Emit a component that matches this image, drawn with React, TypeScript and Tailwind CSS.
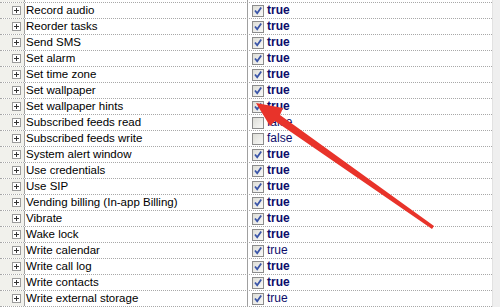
import React from 'react';

type Perm = { name: string; on: boolean; changed: boolean };

// permission list, bold means value differs from default
const perms: Perm[] = [
  { name: 'Record audio', on: true, changed: true },
  { name: 'Reorder tasks', on: true, changed: true },
  { name: 'Send SMS', on: true, changed: true },
  { name: 'Set alarm', on: true, changed: true },
  { name: 'Set time zone', on: true, changed: true },
  { name: 'Set wallpaper', on: true, changed: true },
  { name: 'Set wallpaper hints', on: true, changed: true },
  { name: 'Subscribed feeds read', on: false, changed: false },
  { name: 'Subscribed feeds write', on: false, changed: false },
  { name: 'System alert window', on: true, changed: true },
  { name: 'Use credentials', on: true, changed: true },
  { name: 'Use SIP', on: true, changed: true },
  { name: 'Vending billing (In-app Billing)', on: true, changed: true },
  { name: 'Vibrate', on: true, changed: true },
  { name: 'Wake lock', on: true, changed: true },
  { name: 'Write calendar', on: true, changed: false },
  { name: 'Write call log', on: true, changed: true },
  { name: 'Write contacts', on: true, changed: true },
  { name: 'Write external storage', on: true, changed: false },
];

const PlusBox = () => (
  <svg width="9" height="9" viewBox="0 0 9 9" className="block">
    <rect x="0.5" y="0.5" width="8" height="8" fill="#fff" stroke="#9a9a9a" />
    <path d="M2 4.5h5M4.5 2v5" stroke="#333" strokeWidth="1" />
  </svg>
);

const CheckBox: React.FC<{ on: boolean }> = ({ on }) => (
  <svg width="12" height="12" viewBox="0 0 12 12" className="block">
    <defs>
      <linearGradient id="cbg" x1="0" y1="0" x2="1" y2="1">
        <stop offset="0" stopColor="#dcdcd6" />
        <stop offset="1" stopColor="#fafaf8" />
      </linearGradient>
    </defs>
    <rect x="0.5" y="0.5" width="11" height="11" fill="url(#cbg)" stroke="#8c8c8c" />
    {on && <path d="M3 5.5l2.2 2.8L9.2 2.5" fill="none" stroke="#3a55a8" strokeWidth="1.8" />}
  </svg>
);

const Row: React.FC<{ p: Perm }> = ({ p }) => (
  <div className="flex h-[16px] border-b border-dotted border-[#a8a8a8]">
    <div className="w-[25px] shrink-0 bg-[#f1f1ec] border-r border-[#a0a0a0] flex items-center justify-end pr-[3px]">
      <PlusBox />
    </div>
    <div className="w-[223px] shrink-0 border-r border-[#a0a0a0] pl-[1px] text-[11.5px] leading-[15px] text-black truncate">
      {p.name}
    </div>
    <div className="flex-1 flex items-center gap-[3px] pl-[4px]">
      <CheckBox on={p.on} />
      <span className={`text-[12px] leading-[15px] text-[#0c0c6a] ${p.changed ? 'font-bold' : ''}`}>
        {p.on ? 'true' : 'false'}
      </span>
    </div>
  </div>
);

export default function App() {
  return (
    <div className="relative w-[500px] h-[307px] overflow-hidden bg-white flex" style={{ fontFamily: '"Liberation Sans", Arial, sans-serif' }}>
      <div className="flex-1 flex flex-col">
        <div className="flex h-[3px] shrink-0 border-b border-dotted border-[#a8a8a8]">
          <div className="w-[25px] bg-[#f1f1ec] border-r border-[#a0a0a0]" />
          <div className="w-[223px] border-r border-[#a0a0a0]" />
        </div>
        {perms.map((p) => (
          <Row key={p.name} p={p} />
        ))}
      </div>
      <div className="w-[8px] shrink-0 bg-[#efefef] border-l border-[#e2e2e2]" />

      {/* red callout arrow */}
      <svg className="absolute inset-0 pointer-events-none" width="500" height="307">
        <polygon
          points="256,103 283,108 280,115 434,226 432,229 275,121 270,126"
          fill="#e8332a"
        />
      </svg>
    </div>
  );
}
